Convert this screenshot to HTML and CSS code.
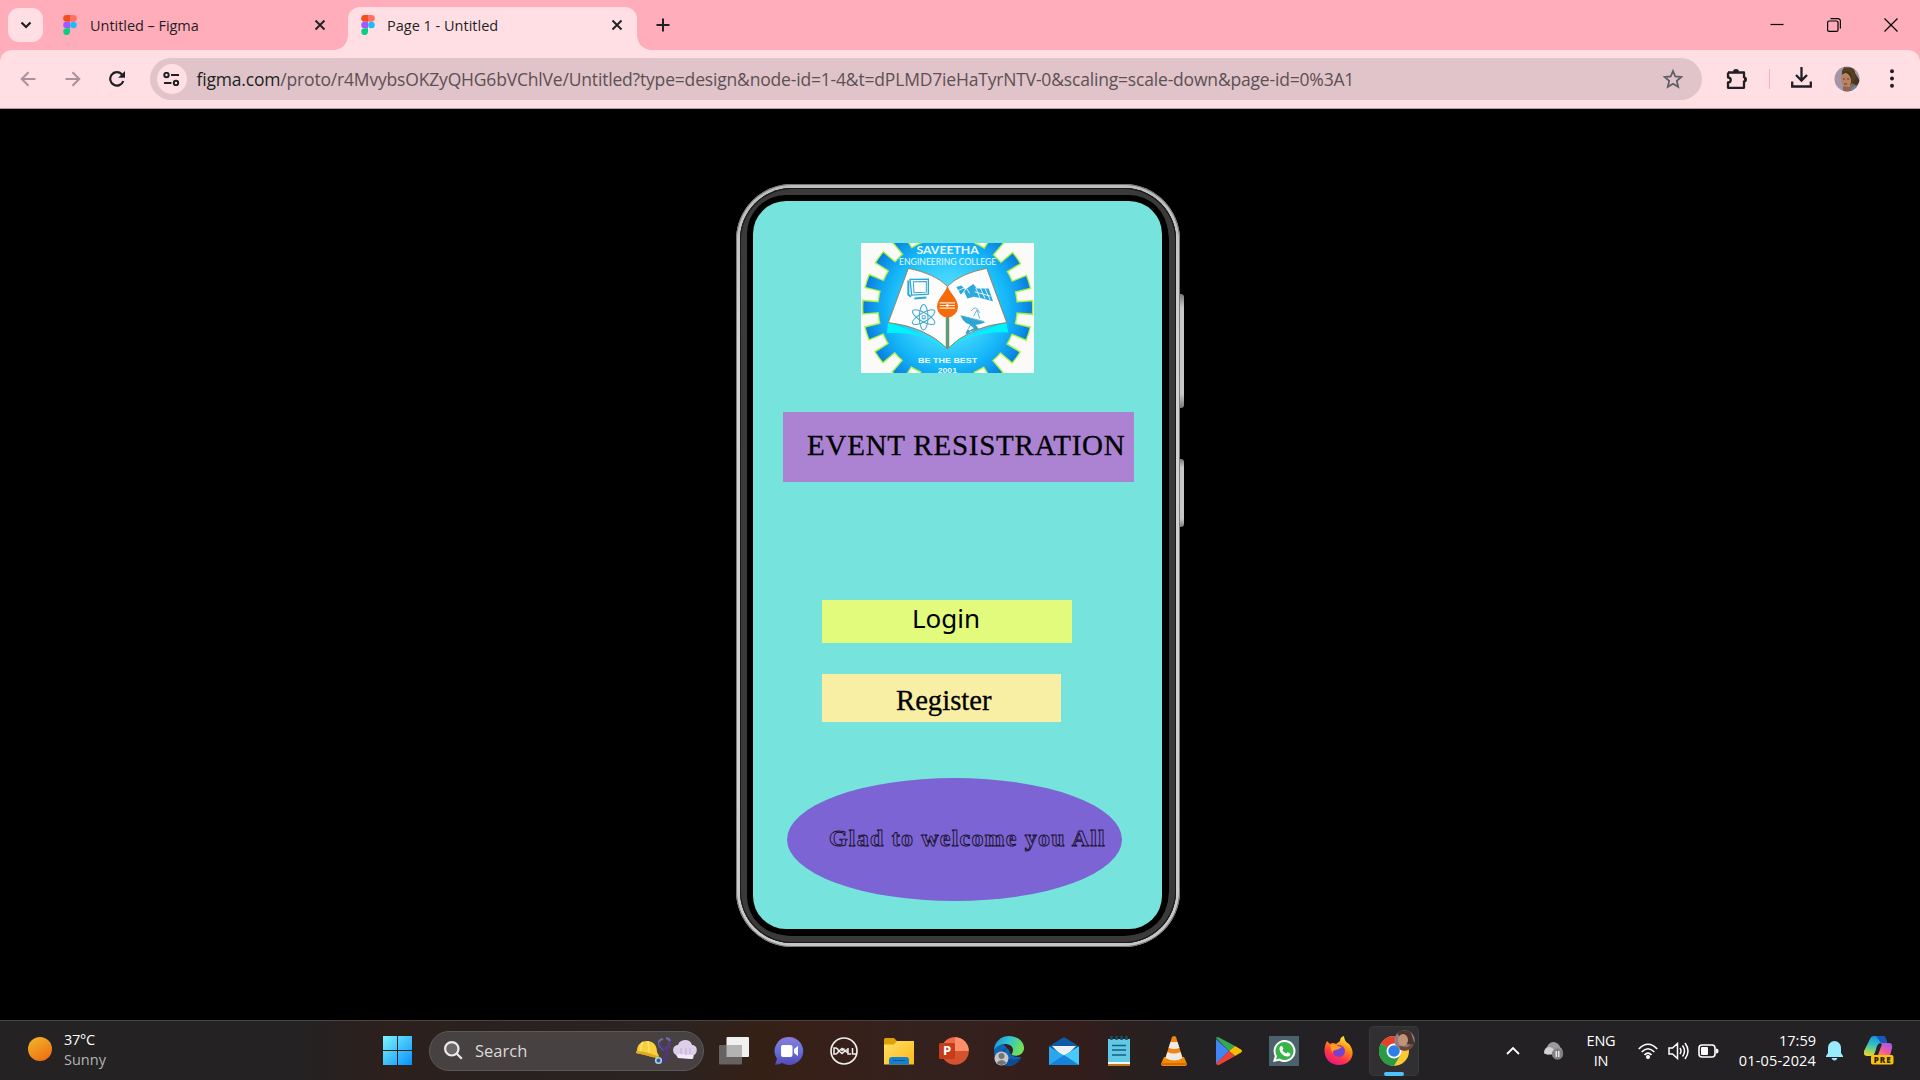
FILE: index.html
```html
<!DOCTYPE html>
<html lang="en">
<head>
<meta charset="utf-8">
<title>Page 1 - Untitled</title>
<link rel="stylesheet" href="styles.css">
</head>
<body>
<svg width="0" height="0" class="defs">
  <defs>
    <symbol id="figma" viewBox="0 0 14 20">
      <path d="M3.5 0H7v6.7H3.5A3.35 3.35 0 0 1 3.5 0z" fill="#f24e1e"/>
      <path d="M7 0h3.5a3.35 3.35 0 0 1 0 6.7H7z" fill="#ff7262"/>
      <path d="M3.5 6.7H7v6.6H3.5a3.3 3.3 0 0 1 0-6.6z" fill="#a259ff"/>
      <circle cx="10.4" cy="10" r="3.3" fill="#1abcfe"/>
      <path d="M3.5 13.3H7v3.3a3.4 3.4 0 1 1-3.5-3.3z" fill="#0acf83"/>
    </symbol>
    <symbol id="cross" viewBox="0 0 12 12"><path d="M1.5 1.5l9 9M10.500 1.500l-9 9" stroke="#1f1f24" stroke-width="1.9" fill="none"/></symbol>
  </defs>
</svg>

<header class="tabstrip">
  <button class="tab-search"><svg width="12" height="8" viewBox="0 0 12 8"><path d="M1.500 1.500L6 6l4.500-4.500" fill="none" stroke="#1f1f24" stroke-width="2.200"/></svg></button>
  <div class="tab">
    <svg class="favicon" width="14" height="20"><use href="#figma"/></svg>
    <span class="tab-title t1">Untitled – Figma</span>
    <svg class="tab-close" width="12" height="12"><use href="#cross"/></svg>
  </div>
  <div class="tab active">
    <svg class="favicon" width="14" height="20"><use href="#figma"/></svg>
    <span class="tab-title t2">Page 1 - Untitled</span>
    <svg class="tab-close" width="12" height="12"><use href="#cross"/></svg>
  </div>
  <svg class="new-tab" width="14" height="14" viewBox="0 0 14 14"><path d="M7 .5v13M.5 7h13" stroke="#1f1f24" stroke-width="2"/></svg>
  <div class="window-controls">
    <svg width="14" height="14" viewBox="0 0 14 14"><path d="M0.500 6.500h13" stroke="#000" stroke-width="1.200"/></svg>
    <svg width="14" height="14" viewBox="0 0 14 14" fill="none" stroke="#000" stroke-width="1.200"><rect x=".6" y="3" width="10.400" height="10.400" rx="1.500"/><path d="M3.500 .7h7.500a2.400 2.400 0 0 1 2.400 2.400v7.500"/></svg>
    <svg width="14" height="14" viewBox="0 0 14 14"><path d="M.5 .5l13 13M13.500 .5l-13 13" stroke="#000" stroke-width="1.200"/></svg>
  </div>
</header>

<div class="toolbar-back">
<nav class="toolbar">
  <svg class="nav-icon" width="16" height="16" viewBox="0 0 16 16" fill="none" stroke="#a8939b" stroke-width="2"><path d="M15.500 8H2M8.500 1.200L1.700 8l6.800 6.800"/></svg>
  <svg class="nav-icon" width="16" height="16" viewBox="0 0 16 16" fill="none" stroke="#a8939b" stroke-width="2"><path d="M.5 8H14M7.500 1.200L14.300 8l-6.800 6.800"/></svg>
  <svg class="nav-icon" width="16" height="16" viewBox="0 0 16 16"><path d="M14.300 10A6.700 6.700 0 1 1 12.800 3.300L14.500 5" fill="none" stroke="#1f1f24" stroke-width="2.200"/><path d="M16 0v6.800H9.200z" fill="#1f1f24"/></svg>
  <div class="omnibox">
    <span class="site-info"><svg width="17" height="14" viewBox="0 0 17 14" fill="none" stroke="#1f1f24" stroke-width="2"><circle cx="3.500" cy="3" r="2.200"/><path d="M8 3h8M1 11h7.500"/><circle cx="13" cy="11" r="2.200"/></svg></span>
    <span class="url"><b>figma.com</b>/proto/r4MvybsOKZyQHG6bVChlVe/Untitled?type=design&amp;node-id=1-4&amp;t=dPLMD7ieHaTyrNTV-0&amp;scaling=scale-down&amp;page-id=0%3A1</span>
    <svg class="star" width="20" height="20" viewBox="0 0 20 20"><path d="M10 2l2.300 5.500 6 .5-4.500 3.900 1.400 5.900L10 14.700l-5.200 3.100 1.400-5.900L1.700 8l6-.5z" fill="none" stroke="#5f5f66" stroke-width="1.800"/></svg>
  </div>
  <svg class="ext" width="22" height="22" viewBox="0 0 22 22"><path d="M2 4.500h16v5.800M18 12.500v7.300H2v-5.300c3.600 0 3.600-5 0-5V4.500" fill="none" stroke="#1f1f24" stroke-width="2.300" stroke-linejoin="round"/><path d="M7 4a3 3 0 0 1 6 0zM18 8.500a3 3 0 0 1 0 6z" fill="#1f1f24"/></svg>
  <i class="divider"></i>
  <svg class="download" width="21" height="21" viewBox="0 0 21 21" fill="none" stroke="#1f1f24" stroke-width="2.300"><path d="M10.500 0v13M5 8l5.500 5.500L16 8M1.200 14.500v5h18.600v-5"/></svg>
  <svg class="avatar" width="26" height="26" viewBox="0 0 26 26">
    <clipPath id="av"><circle cx="13" cy="13" r="12.500"/></clipPath>
    <g clip-path="url(#av)"><rect width="26" height="26" fill="#a394a8"/><path d="M8 5c2-5 13-5 13 2l5 8-4 6-13-5z" fill="#47351f"/><ellipse cx="12" cy="14" rx="5" ry="7" fill="#b98361" transform="rotate(-12 12 14)"/><path d="M7 9c2-5 8-6 10-1l1 9 4-5-3-9-9-2z" fill="#55401f"/><path d="M9 20l6 1 3-4 5 3v6H9z" fill="#916650"/><path d="M17 22l6-3 3 7h-9z" fill="#5d8cab"/><path d="M9 13h2M13 13h2M10 18h3" stroke="#6b3b2a" stroke-width="1"/></g>
  </svg>
  <svg class="menu" width="4" height="19" viewBox="0 0 4 19" fill="#1f1f24"><circle cx="2" cy="2.200" r="2"/><circle cx="2" cy="9.500" r="2"/><circle cx="2" cy="16.800" r="2"/></svg>
</nav>
</div>

<main class="stage">
  <div class="phone">
    <div class="bezel">
      <section class="screen">
        <svg class="logo" viewBox="0 0 519 389" preserveAspectRatio="none">
          <defs>
            <radialGradient id="gear" gradientUnits="userSpaceOnUse" cx="260" cy="193" r="255"><stop offset="0" stop-color="#6be6fc"/><stop offset=".4" stop-color="#3fd3fd"/><stop offset=".7" stop-color="#16b8f8"/><stop offset=".85" stop-color="#109df0"/><stop offset="1" stop-color="#0a7bdc"/></radialGradient>
          </defs>
          <rect width="519" height="389" fill="#fafbf8"/>
          <g fill="none" transform="rotate(-5.100 260 193)"><circle cx="260" cy="193" r="232" stroke="#a8f53c" stroke-width="50" pathLength="360" stroke-dasharray="10.200 7.800"/></g>
          <circle cx="260" cy="193" r="211" fill="#a8f53c"/>
          <circle cx="260" cy="193" r="207" fill="url(#gear)"/>
          <g fill="none" transform="rotate(-4.100 260 193)"><circle cx="260" cy="193" r="228" stroke="url(#gear)" stroke-width="50" pathLength="360" stroke-dasharray="8.200 9.800"/></g>
          <path d="M82 236l-5 34q105-8 181 48q82-56 184-50l-7-32-177 70z" fill="#00f3fa"/>
          <path d="M142 76q78 15 117 53v187q-66-66-177-78z" fill="#fdfdfd" stroke="#a57445" stroke-width="2.500"/>
          <path d="M377 76q-78 15-117 53v187q66-66 177-78z" fill="#fdfdfd" stroke="#a57445" stroke-width="2.500"/>
          <path d="M255 215h9v98l-5 4-4-4z" fill="#4f9f86" stroke="#b08050" stroke-width="1.500"/>
          <path d="M259 127c7 24 32 39 32 64a31 31 0 0 1-63 0c0-25 26-40 31-64z" fill="#f56a0b"/>
          <path d="M236 179h46M236 187h46M236 195h46" stroke="#ffe9cf" stroke-width="3.500"/><circle cx="259" cy="187" r="4" fill="#fff"/>
          <g fill="none" stroke="#2ba9d5" stroke-width="4"><path d="M147 109l55-1v45l-50 3z"/><path d="M157 116l39-1v32l-37 2z" stroke-width="3"/><path d="M142 112v42l8 7M160 166l36-3" stroke-width="6"/></g>
          <g fill="none" stroke="#43accf" stroke-width="3.200"><ellipse cx="188" cy="222" rx="13" ry="38"/><ellipse cx="188" cy="222" rx="13" ry="38" transform="rotate(60 188 222)"/><ellipse cx="188" cy="222" rx="13" ry="38" transform="rotate(120 188 222)"/><circle cx="188" cy="222" r="5"/></g>
          <path d="M286 132l15-5 12 12 24-16 11 13 35 0 13 38-35-9-22-4-20 5-9-20-11 8z" fill="#2da9db"/>
          <path d="M290 143l23-10M303 153l13-18 10 16M341 146l47 13M344 134l13 31M358 134l14 32M372 136l15 34" stroke="#fff" stroke-width="2.500" fill="none"/>
          <path d="M298 217q20 45 75 20zM328 243l-15 28 7 1 9-8 25-6-11-14z" fill="#2ca5d2"/><path d="M302 218l68 17M338 219l10-19 8 26M326 256l17 13M345 243l-20 20" stroke="#47abd0" stroke-width="2.500" fill="none"/><path d="M321 259l8-12 9 8-12 7z" fill="#fff"/>
          <path d="M330 203q15-20 26 6" fill="none" stroke="#47abd0" stroke-width="2.500"/>
          <g fill="#e8fbff" text-anchor="middle">
            <text class="logo-name" x="260" y="32" textLength="187" lengthAdjust="spacingAndGlyphs">SAVEETHA</text>
            <text class="logo-sub" x="260" y="66" textLength="292" lengthAdjust="spacingAndGlyphs">ENGINEERING COLLEGE</text>
            <text class="logo-motto" x="260" y="359" textLength="178" lengthAdjust="spacingAndGlyphs">BE THE BEST</text>
            <text class="logo-motto" x="259" y="389" textLength="58" lengthAdjust="spacingAndGlyphs">2001</text>
          </g>
        </svg>
        <h1 class="banner"><span>EVENT RESISTRATION</span></h1>
        <div class="btn login"><span>Login</span></div>
        <div class="btn register"><span>Register</span></div>
        <div class="welcome"><span>Glad to welcome you All</span></div>
      </section>
    </div>
    <i class="key volume"></i>
    <i class="key power"></i>
  </div>
</main>

<footer class="taskbar">
  <div class="weather">
    <i class="sun"></i>
    <div class="weather-text"><span>37°C</span><span class="dim">Sunny</span></div>
  </div>
  <div class="dock">
    <svg class="start" width="29" height="29" viewBox="0 0 29 29"><defs><linearGradient id="win" gradientUnits="userSpaceOnUse" x1="0" y1="0" x2="29" y2="29"><stop offset="0" stop-color="#7df3ff"/><stop offset="1" stop-color="#0791fb"/></linearGradient></defs><path d="M0 0h14v14H0zM15 0h14v14H15zM0 15h14v14H0zM15 15h14v14H15z" fill="url(#win)"/></svg>
    <div class="search">
      <svg width="19" height="19" viewBox="0 0 19 19" fill="#6b6768" stroke="#ecebec" stroke-width="2.200"><circle cx="7.800" cy="7.800" r="6.700"/><path d="M12.800 12.800l5 5"/></svg>
      <span>Search</span>
      <svg class="jobs" width="62" height="30" viewBox="0 0 62 30">
        <path d="M2 15C2 8 7 5 12 5c7 0 10 5 10 11l2 4-1 2-6-1-7-2-9-2z" fill="#f8cf3c"/><path d="M1 15l9 1 13 4v2l-6-1-7-2-9-2z" fill="#e0a81c"/><path d="M8 6q-3 4-2 9M13 5l1 11" stroke="#ffe672" stroke-width="1.500" fill="none"/>
        <path d="M28 3q-6 1-3 7l4 4M31 2q6 1 3 8l-4 4" fill="none" stroke="#6d6fae" stroke-width="2.200"/><path d="M30 14q4 5 1 9-3 2-7 1" fill="none" stroke="#54318c" stroke-width="2.200"/><path d="M25 6q-1 4 5 8 6-4 5-9" fill="none" stroke="#54318c" stroke-width="2"/><circle cx="23.500" cy="24.500" r="2.800" fill="#315e87" stroke="#a9d0ee" stroke-width="1.600"/>
        <path d="M41 19c-5-3-3-10 2-10 1-4 5-5 8-5s6 3 6 5c6 0 6 8 2 10l-1 4-15-1z" fill="#ddcfe9"/><path d="M42 18l16 1-1 4q-8-1-14-1z" fill="#f3e9fa"/><path d="M46 12v6M51 12v7M55 12v6" stroke="#c2addb"/>
      </svg>
    </div>
    <div class="apps">
      <span class="app"><svg width="30" height="30" viewBox="0 0 30 30"><rect x="7.500" y="1" width="22.500" height="20" rx="1" fill="#f0f0f0"/><rect x="0" y="9" width="23" height="19.500" rx="1" fill="#656261"/><path d="M7.500 9H23v12H7.500z" fill="#b4b3b3"/></svg></span>
      <span class="app"><svg width="30" height="30" viewBox="0 0 30 30"><defs><linearGradient id="chat" x2="0" y2="1"><stop stop-color="#8b7cd8"/><stop offset=".5" stop-color="#6570dc"/><stop offset="1" stop-color="#5349b4"/></linearGradient></defs><path d="M15 1a14 14 0 1 1-7 26q-3 2-7 1.800l2-6A14 14 0 0 1 15 1z" fill="url(#chat)"/><rect x="7" y="9" width="11.500" height="12" rx="2" fill="#fff"/><path d="M20 13l4-3v10l-4-3z" fill="#fff"/></svg></span>
      <span class="app"><svg width="30" height="30" viewBox="0 0 30 30"><circle cx="15" cy="15" r="13" fill="none" stroke="#f0eeee" stroke-width="1.700"/><g fill="none" stroke="#f0eeee" stroke-width="1.500"><path d="M5 12v6h2q2.500-1 2.500-3t-2.500-3zM10 15l3-2.500 2.500 2M10 15l3 2.500 3.500-3M12.500 15l3-2.500M19 12v6h3M23.500 12v6H27M16.500 14h2.500M13 17.500l3-2.500 3 2"/></g></svg></span>
      <span class="app"><svg width="30" height="30" viewBox="0 0 30 30"><defs><linearGradient id="fold" x2="1" y2="1"><stop stop-color="#ffdf68"/><stop offset="1" stop-color="#fcb915"/></linearGradient></defs><path d="M0 3.500Q0 2 1.500 2H10l3 3v7H0z" fill="#dda006"/><path d="M0 8.500h10l3-3.500h17v23.500H0z" fill="url(#fold)"/><path d="M5 28.500V24q0-3 3-3h14q3 0 3 3v4.500z" fill="#1580cf"/><path d="M9 24.500h12" stroke="#0b5493"/></svg></span>
      <span class="app"><svg width="30" height="30" viewBox="0 0 30 30"><circle cx="16" cy="15" r="13.800" fill="#d35230"/><path d="M16 1.200A13.800 13.800 0 0 0 2.200 15H16z" fill="#ed6c47"/><path d="M16 1.200A13.800 13.800 0 0 1 29.800 15H16z" fill="#ff8f6b"/><rect x="0" y="7" width="16" height="16" rx="1.500" fill="#c43e1c"/><text x="8" y="19" class="ppt">P</text></svg></span>
      <span class="app"><svg width="30" height="30" viewBox="0 0 30 30"><defs><linearGradient id="edge" x2="1" y2=".3"><stop stop-color="#1b91d7"/><stop offset=".5" stop-color="#2fc2d5"/><stop offset="1" stop-color="#70e159"/></linearGradient></defs><path d="M0 16q0-7 9-8l6 6q1 8 12 7-4 9-13 9Q1 29 0 16z" fill="#0f64b3"/><path d="M0 15C0 6 7 0 15 0c9 0 15 6 15 12 0 7-8 9-12 7-1-1 1-2 1-5 0-4-4-6-8-6-5 0-10 3-11 7z" fill="url(#edge)"/><path d="M12 12c-4 9 5 14 15 10-3 6-10 9-16 7-7-5-5-14 1-17z" fill="#0d4c92"/><circle cx="7.500" cy="22.500" r="7" fill="#c7c7c7"/><circle cx="7.500" cy="20" r="3" fill="#757575"/><path d="M2.500 27q5-6 10 0-5 4-10 0z" fill="#757575"/></svg></span>
      <span class="app"><svg width="30" height="30" viewBox="0 0 30 30"><path d="M0 10.500L14 1.500h2l14 9v10H0z" fill="#0d5ba7"/><path d="M3 10h24L15 22z" fill="#eef1f4"/><path d="M0 10.500l15 9 15-9V29H0z" fill="#2ba8ec"/><path d="M30 10.500V29L15 19.500z" fill="#47cafa"/><path d="M0 29l15-10 15 10z" fill="#1583d9"/></svg></span>
      <span class="app"><svg width="30" height="30" viewBox="0 0 30 30"><path d="M4 3h22v27H4z" fill="#61c9e5"/><path d="M4 26h22v2H4z" fill="#f5f8fa"/><path d="M4 28h22v2H4z" fill="#c5781b"/><path d="M8 9.500h14M8 14h14M8 19h14" stroke="#15627d" stroke-width="1.700"/><path d="M7.500 0v4M12.500 0v4M17.500 0v4M22.500 0v4" stroke="#174f68" stroke-width="2.400"/></svg></span>
      <span class="app"><svg width="30" height="30" viewBox="0 0 30 30"><path d="M5 21h20l3 7q0 2-2 2H4q-2 0-2-2z" fill="#f48b08"/><path d="M13 1q2-2 4 0l7 22q-9 5-18 0z" fill="#f28412"/><path d="M11.500 6h7l2 6q-5 2-11 0zM8.500 16q6 3 13 0l2 6q-8 5-17 0z" fill="#eeeae6"/><path d="M3 27h24v2H3z" fill="#d96a05"/></svg></span>
      <span class="app"><svg width="30" height="30" viewBox="0 0 30 30"><path d="M2 3v25l13-13z" fill="#4285f4"/><path d="M2 2q1-2 4 0l15 8-6 5z" fill="#34a853"/><path d="M21 10l6 3.500q2 1.500 0 3L21 20l-6-5z" fill="#fbbc04"/><path d="M15 15l6 5-15 8.500q-3 1.500-4-1z" fill="#ea4335"/></svg></span>
      <span class="app"><svg width="30" height="30" viewBox="0 0 30 30"><path d="M0 0h30v30H0z" fill="#4b616c"/><path d="M15.500 4a11 11 0 1 1-5.200 20.700L4 26l1.800-6A11 11 0 0 1 15.500 4z" fill="#fff"/><path d="M15.500 6a9 9 0 1 1-5 16.500L7 23.400l1-3.400A9 9 0 0 1 15.500 6z" fill="#37b34a"/><path d="M10.800 11q1.500-1.800 2.600-.5l1 2.300-1 1.500q1.200 2.500 3.900 3.300l1.300-1.400 2.600 1.300q.6 2.500-2.600 3c-4 .3-9.500-5-7.800-9.500z" fill="#fff"/></svg></span>
      <span class="app"><svg width="30" height="30" viewBox="0 0 30 30"><defs><linearGradient id="ff" x1=".8" x2=".3" y2="1"><stop stop-color="#fff44f"/><stop offset=".35" stop-color="#ff980e"/><stop offset=".7" stop-color="#ff3647"/><stop offset="1" stop-color="#e31587"/></linearGradient></defs><path d="M3 5l3 3q3-2 6 0l4-3q0-4 4-5 0 5 5 8c8 9 2 21-10 21C2 29-3 16 3 5z" fill="url(#ff)"/><circle cx="15" cy="15" r="6" fill="#7542d5"/><path d="M6 9q4-2 8 1l4 1-4 2.500q-4 0-6 3z" fill="#ff9a1d"/></svg></span>
      <span class="app current"><svg width="38" height="36" viewBox="0 0 38 36"><circle cx="15" cy="21" r="15" fill="#fcc934"/><path d="M15 21L2 13.500A15 15 0 0 1 28 13.500H15z" fill="#e5402f"/><path d="M2 13.500A15 15 0 0 0 15 36l6.500-11.200L15 21z" fill="#2a9b47"/><path d="M15 13.500h13L21.500 25z" fill="#fcc934"/><circle cx="15" cy="21" r="7.500" fill="#fff"/><circle cx="15" cy="21" r="5.800" fill="#2f7de9"/><clipPath id="mini"><circle cx="25.500" cy="10.500" r="10.300"/></clipPath><g clip-path="url(#mini)"><rect x="15" width="22" height="21" fill="#8e7c84"/><path d="M18 3q8-6 14 0l4 12-10-1z" fill="#4a352b"/><ellipse cx="24" cy="10" rx="5" ry="6" fill="#c09477"/><path d="M20 16l8 1 6-3 2 7H22z" fill="#6d4737"/></g></svg></span>
    </div>
  </div>
  <div class="tray">
    <svg class="chev" width="14" height="9" viewBox="0 0 14 9"><path d="M1 8l6-6 6 6" fill="none" stroke="#fff" stroke-width="1.800"/></svg>
    <svg class="cloud" width="21" height="18" viewBox="0 0 21 18"><path d="M4 13a4.500 4.500 0 0 1 0-8q2-5 7-5 5 1 6 5 4 3 2 7z" fill="#9b9b9b"/><path d="M1 11q0-5 5-6 4 0 9 7H3q-2 0-2-1z" fill="#d2d2d2"/><circle cx="14.500" cy="12" r="5.700" fill="#818181"/><path d="M13.200 9v6M15.800 9v6" stroke="#fff" stroke-width="1.200"/></svg>
    <div class="lang"><span>ENG</span><span>IN</span></div>
    <svg class="wifi" width="20" height="16" viewBox="0 0 20 16" fill="none" stroke="#fff" stroke-width="1.700"><path d="M.8 6q9.200-9.500 18.400 0M3.700 9q6.300-6.500 12.600 0M6.500 12q3.500-3.600 7 0"/><circle cx="10" cy="14" r="1.200" fill="#fff"/></svg>
    <svg class="vol" width="21" height="18" viewBox="0 0 21 18" fill="none" stroke="#fff" stroke-width="1.500"><path d="M1 6h3.500L9.500 1.500v15L4.500 12H1zM12 6q2 3 0 6M14.500 3.500q4 5.500 0 11M17 1q6 8 0 16"/></svg>
    <svg class="batt" width="21" height="14" viewBox="0 0 21 14"><rect x="1" y="1" width="16" height="12" rx="3" fill="none" stroke="#fff" stroke-width="1.600"/><rect x="3" y="3" width="7" height="8" rx="1" fill="#fff"/><path d="M18 4.500q2.500 0 2.500 2.500T18 9.500z" fill="#fff"/></svg>
    <div class="clock"><span>17:59</span><span class="date">01-05-2024</span></div>
    <svg class="bell" width="17" height="20" viewBox="0 0 17 20"><path d="M8.500 0a6.500 6.500 0 0 1 6.500 6.500V12l2 3v1H0v-1l2-3V6.500A6.500 6.500 0 0 1 8.500 0zM5.500 17h6q-1 2.500-3 2.500t-3-2.500z" fill="#99ebff"/></svg>
    <svg class="copilot" width="30" height="29" viewBox="0 0 30 29"><defs><linearGradient id="cpa" x1=".6" x2=".3" y2="1"><stop stop-color="#158ee8"/><stop offset=".5" stop-color="#37c6b9"/><stop offset="1" stop-color="#e6d72b"/></linearGradient><linearGradient id="cpb" x1=".8" x2=".2" y2="1"><stop stop-color="#a05bea"/><stop offset=".6" stop-color="#ef5aa0"/><stop offset="1" stop-color="#f98b54"/></linearGradient></defs><path d="M6 3q1-3 4-3h9q2 0 3 3l1 4h-6q-3 0-4 4l-2 6q-1 3-4 3H3q-4 0-3-5z" fill="url(#cpa)"/><path d="M12 0h7q2 0 3 3l1 4h-6z" fill="#1658bd"/><path d="M17 7h8q4 0 3 5l-2 8H13z" fill="url(#cpb)"/><path d="M15 8q-2 1-3 6l-2 5h4l4-11z" fill="#242326"/><rect x="7" y="19" width="22.500" height="9.500" rx="2" fill="#fdc309"/><text x="18.200" y="26.600" class="pre" textLength="17">PRE</text></svg>
  </div>
</footer>
</body>
</html>
```
FILE: styles.css
```css
* { box-sizing: border-box; }
body {
  margin: 0;
  width: 1920px;
  height: 1080px;
  overflow: hidden;
  display: flex;
  flex-direction: column;
  background: #000;
  font-family: "Open Sans", "Noto Sans", sans-serif;
}
svg { display: block; flex: none; }
.defs { position: absolute; }

/* Browser tabs */
.tabstrip {
  height: 50px;
  flex: none;
  display: flex;
  align-items: flex-start;
  padding-left: 8px;
  background: #ffadbb;
}
.tab-search {
  width: 35px;
  height: 34px;
  margin-top: 8px;
  padding: 0;
  border: 0;
  border-radius: 11px;
  background: #ffdfe4;
  display: grid;
  place-items: center;
}
.tab {
  display: flex;
  align-items: center;
  height: 43px;
  margin-top: 7px;
  padding-bottom: 7px;
  width: 305px;
  padding-left: 20px;
}
.tab.active {
  position: relative;
  width: 289px;
  padding-left: 13px;
  border-radius: 12px 12px 0 0;
  background: #ffdfe4;
}
.tab.active::before, .tab.active::after {
  content: "";
  position: absolute;
  bottom: 0;
  width: 14px;
  height: 14px;
}
.tab.active::before { left: -14px; background: radial-gradient(circle at 0 0, transparent 13.5px, #ffdfe4 14px); }
.tab.active::after { right: -14px; background: radial-gradient(circle at 100% 0, transparent 13.5px, #ffdfe4 14px); }
.tab-title {
  width: 224px;
  margin-left: 13px;
  font-size: 14.5px;
  color: #1f1f24;
  white-space: nowrap;
}
.t1 { letter-spacing: -0.04px; }
.t2 { width: 223px; margin-left: 12px; margin-right: 1px; letter-spacing: 0; }
.new-tab { margin: 18px 0 0 19px; }
.window-controls {
  display: flex;
  gap: 43px;
  margin: 18px 22px 0 auto;
}

/* Toolbar */
.toolbar-back { background: #ffadbb; flex: none; }
.toolbar {
  height: 59px;
  display: flex;
  align-items: center;
  padding: 0 26px 1px 20px;
  background: #ffdfe4;
  border-bottom: 1px solid #b09a9e;
  border-radius: 12px 12px 0 0;
}
.nav-icon { margin-right: 28.5px; }
.omnibox {
  width: 1552px;
  height: 42px;
  margin-left: -4px;
  padding: 0 19px 0 7px;
  border-radius: 21px;
  background: #e0c4c9;
  display: flex;
  align-items: center;
  flex: none;
}
.site-info {
  width: 30px;
  height: 30px;
  border-radius: 50%;
  background: #ffdfe4;
  display: grid;
  place-items: center;
}
.url {
  margin-left: 10px;
  font-size: 17.5px;
  letter-spacing: -0.18px;
  color: #5c5055;
  white-space: nowrap;
}
.url b { font-weight: 400; color: #1f1f24; }
.star { margin-left: auto; }
.ext { margin-left: 24px; }
.divider { width: 2px; height: 20px; margin-left: 21px; background: #ffadbb; }
.download { margin-left: 22px; margin-bottom: 2px; }
.avatar { margin-left: 22px; }
.menu { margin-left: 30px; }

/* Prototype stage */
.stage {
  height: 911px;
  flex: none;
  padding: 75px 0 0 736px;
}
.phone {
  position: relative;
  width: 444px;
  height: 763px;
  padding: 4px;
  border-radius: 56px;
  background: linear-gradient(#bcbcbc, #d2d2d2 20%, #cfcfcf 80%, #c6c6c6);
  box-shadow: inset 0 0 0 1px #777;
}
.bezel {
  height: 100%;
  padding: 13px 14px 14px 13px;
  border-radius: 52px;
  background: #000;
  box-shadow: inset 0 0 0 1px #191919, inset 0 0 0 7px #3a3a3a, inset 0 1px 0 7px #202020;
}
.screen {
  width: 409px;
  height: 728px;
  border-radius: 33px;
  background: #76e4dc;
  display: flex;
  flex-direction: column;
  align-items: flex-start;
  box-shadow: 0 0 0 6px #000;
}
.key {
  position: absolute;
  left: 444px;
  width: 4px;
  border-radius: 0 3px 3px 0;
  background: linear-gradient(#777, #c8c8c8 12%, #c8c8c8 88%, #777);
}
.volume { top: 110px; height: 114px; }
.power { top: 275px; height: 68px; }

.logo { width: 173px; height: 130px; margin: 42px 0 0 108px; }
.logo-name { font: 700 33px Lato, sans-serif; }
.logo-sub { font: 400 26px Lato, sans-serif; }
.logo-motto { font: 700 23px "Liberation Sans", sans-serif; }

.banner {
  width: 351px;
  height: 70px;
  margin: 39px 0 0 30px;
  padding: 16px 0 0 24px;
  background: #ac83d3;
  font: 400 29px/34px "Liberation Serif", serif;
  letter-spacing: 0.76px;
  color: #000;
  -webkit-text-stroke: 0.3px #000;
  white-space: nowrap;
}
.btn { margin-left: 69px; color: #000; white-space: nowrap; }
.login {
  width: 250px;
  height: 43px;
  margin-top: 118px;
  padding-left: 90px;
  background: #e3fb7c;
  font: 400 26px/37px "Noto Sans", sans-serif;
}
.register {
  width: 239px;
  height: 48px;
  margin-top: 31px;
  padding: 9px 0 0 74px;
  background: #f9efa4;
  font: 400 28.700px/34px "Liberation Serif", serif;
  -webkit-text-stroke: 0.3px #000;
}
.welcome {
  width: 335px;
  height: 123px;
  margin: 56px 0 0 34px;
  padding: 43px 0 0 42px;
  border-radius: 50%;
  background: #7c64d4;
  font: 700 24px/34px "Liberation Serif", serif;
  letter-spacing: 1.2px;
  color: #7c64d4;
  -webkit-text-stroke: 0.9px #17122b;
  white-space: nowrap;
}

/* Taskbar */
.taskbar {
  height: 60px;
  flex: none;
  display: flex;
  align-items: center;
  border-top: 1px solid #484647;
  background: linear-gradient(90deg, #242223 0, #242223 300px, #2d201d 390px, #29211f 480px, #2a2322 660px, #352016 760px, #37201a 850px, #34211d 920px, #341d1b 1080px, #2b1f1e 1120px, #232123 1200px, #232123 100%);
  color: #fff;
  font-size: 14.500px;
  line-height: 20px;
}
.weather { display: flex; align-items: center; width: 383px; padding-left: 28px; }
.sun { width: 24px; height: 24px; margin-top: -3px; border-radius: 50%; background: linear-gradient(150deg, #eebb2b, #f0650f); }
.weather-text { display: flex; flex-direction: column; margin-left: 12px; letter-spacing: -0.3px; margin-top: -1px; }
.dim { color: #b5b3b3; letter-spacing: 0; }
.dock { display: flex; align-items: center; width: 1036px; }
.search {
  display: flex;
  align-items: center;
  width: 275px;
  height: 40px;
  margin-left: 17px;
  padding: 0 6px 0 14px;
  border-radius: 20px;
  border: 1px solid #5c5859;
  background: #474142;
  font-size: 16.500px;
  color: #dcdada;
}
.search span { margin-left: 12px; }
.jobs { margin-left: auto; }
.apps { display: flex; gap: 5px; margin-left: 5px; }
.app { width: 50px; height: 50px; display: grid; place-items: center; }
.current {
  border-radius: 5px;
  background: #302f31;
  box-shadow: 0 0 0 1px #38373a inset;
  place-items: start;
  padding: 4px 0 0 10px;
  border-bottom: 0;
  align-content: space-between;
}
.current::after { content: ""; width: 20px; height: 4px; margin-left: 5px; border-radius: 2px; background: #4cc2ff; }
.ppt { font: 700 13px "Open Sans", sans-serif; fill: #fff; text-anchor: middle; }
.tray { display: flex; align-items: center; margin-left: 87px; flex: none; }
.cloud { margin-left: 23px; }
.lang { width: 44px; margin-left: 15px; display: flex; flex-direction: column; align-items: center; letter-spacing: -0.2px; }
.wifi { margin-left: 15px; }
.vol { margin-left: 10px; }
.batt { margin-left: 9px; }
.clock { width: 90px; margin-left: 7px; display: flex; flex-direction: column; align-items: flex-end; letter-spacing: 0; }
.date { letter-spacing: 0.15px; }
.bell { margin-left: 10px; }
.copilot { margin-left: 21px; }
.pre { font: 800 8px "Open Sans", sans-serif; fill: #2b2107; text-anchor: middle; }
```
